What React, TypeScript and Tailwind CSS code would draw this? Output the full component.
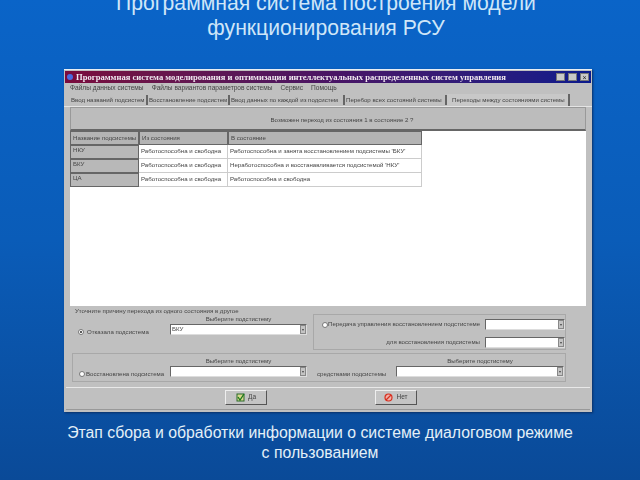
import React from "react";

const tabs = [
  { label: "Ввод названий подсистем", width: "w-[78px]" },
  { label: "Восстановление подсистем", width: "w-[82px]" },
  { label: "Ввод данных по каждой из подсистем", width: "w-[115px]" },
  { label: "Перебор всех состояний системы", width: "w-[102px]" },
];

const rows = [
  ["НКУ", "Работоспособна и свободна", "Работоспособна и занята восстановлением подсистемы 'БКУ'"],
  ["БКУ", "Работоспособна и свободна", "Неработоспособна и восстанавливается подсистемой 'НКУ'"],
  ["ЦА", "Работоспособна и свободна", "Работоспособна и свободна"],
];

const Radio = ({ checked }: { checked?: boolean }) => (
  <span className="w-[6px] h-[6px] shrink-0 rounded-full bg-white border border-[#777] flex items-center justify-center">
    {checked && <span className="w-[2px] h-[2px] rounded-full bg-[#222]" />}
  </span>
);

const Combo = ({ className, value }: { className: string; value?: string }) => (
  <div className={`h-[11px] shrink-0 bg-white border border-[#666] border-b-[#ddd] border-r-[#ddd] flex items-center justify-between pl-[1px] ${className}`}>
    <span>{value}</span>
    <span className="w-[6px] h-[9px] bg-[#c4c4c4] border border-[#888] flex items-center justify-center text-[4px] leading-none">▾</span>
  </div>
);

const App: React.FC = () => {
  return (
    <div className="w-[640px] h-[480px] overflow-hidden flex flex-col items-center bg-gradient-to-b from-[#0a64c8] via-[#0a5cb8] to-[#0a4a98] font-['Liberation_Sans',sans-serif]">
      <h1 className="mt-[-10px] h-[79px] pl-[12px] text-[21.2px] leading-[25px] text-[#cfe6f8] text-center font-normal shrink-0 whitespace-nowrap">
        Программная система построения модели
        <br />
        функционирования РСУ
      </h1>

      {/* program window */}
      <div className="self-start ml-[64px] w-[528px] h-[343px] shrink-0 bg-[#c0c0c0] border-t border-[#e8eef4] flex flex-col text-[6.1px] leading-none text-[#444] shadow-[1px_1px_2px_#0a2f66] blur-[0.4px]">
        <div className="h-[12px] mx-[1px] mt-[1px] flex items-center gap-[3px] pl-[2px] pr-[2px] bg-gradient-to-r from-[#7a0a3c] via-[#4a1464] to-[#0a1a8c]">
          <span className="w-[6px] h-[6px] rounded-sm bg-[#4a6ae0]" />
          <span className="flex-1 text-[8.6px] font-bold text-[#f0e8f0] font-['Liberation_Serif',serif] whitespace-nowrap">
            Программная система моделирования и оптимизации интеллектуальных распределенных систем управления
          </span>
          <span className="w-[9px] h-[8px] bg-[#c8c8c8] border border-[#777]" />
          <span className="w-[9px] h-[8px] bg-[#c8c8c8] border border-[#777]" />
          <span className="w-[9px] h-[8px] bg-[#c8c8c8] border border-[#777] text-[7px] text-[#222] flex items-center justify-center">×</span>
        </div>

        <div className="h-[11px] flex items-center gap-[8px] pl-[6px] text-[6.6px] whitespace-nowrap">
          <span>Файлы данных системы</span>
          <span>Файлы вариантов параметров системы</span>
          <span>Сервис</span>
          <span>Помощь</span>
        </div>

        <div className="h-[13px] flex items-center pl-[6px] whitespace-nowrap border-b border-[#e4e4e4]">
          {tabs.map((t) => (
            <span key={t.label} className={`${t.width} h-[10px] shrink-0 flex items-center border-r-2 border-[#666] pl-[1px]`}>
              {t.label}
            </span>
          ))}
          <span className="h-[12px] w-[123px] shrink-0 pl-[5px] flex items-center bg-[#c8c8c8] border-r-2 border-[#666]">
            Переходы между состояниями системы
          </span>
        </div>

        <div className="mx-[6px] h-[24px] pl-[28px] pt-[3px] bg-[#bcbcbc] border border-[#999] border-b-2 border-b-[#666] flex items-center justify-center">
          Возможен переход из состояния 1 в состояние 2 ?
        </div>

        <div className="mx-[6px] h-[175px] bg-white">
          <div className="grid grid-cols-[69px_89px_194px] w-[352px]">
            {["Название подсистемы", "Из состояния", "В состояние"].map((h) => (
              <div key={h} className="h-[14px] bg-[#b4b4b4] border border-[#666] pl-[2px] flex items-center whitespace-nowrap">
                {h}
              </div>
            ))}
            {rows.map((r) => (
              <React.Fragment key={r[0]}>
                <div className="h-[14px] bg-[#b8b8b8] border border-[#666] pl-[2px] pb-[3px] flex items-center">{r[0]}</div>
                <div className="h-[14px] border-b border-r border-[#ccc] pl-[2px] flex items-center whitespace-nowrap">{r[1]}</div>
                <div className="h-[14px] border-b border-r border-[#ccc] pl-[2px] flex items-center whitespace-nowrap">{r[2]}</div>
              </React.Fragment>
            ))}
          </div>
        </div>

        {/* причина перехода */}
        <div className="h-[81px] flex flex-col pl-[8px] whitespace-nowrap">
          <div className="h-[8px] pt-[2px] pl-[3px]">Уточните причину перехода из одного состояния в другое</div>
          <div className="flex h-[36px]">
            <div className="w-[241px] flex items-end pb-[15px] pl-[6px] gap-[3px]">
              <Radio checked />
              <span className="w-[80px]">Отказала подсистема</span>
              <div className="flex flex-col items-center gap-[2px]">
                <span>Выберите подстистему</span>
                <Combo className="w-[137px]" value="БКУ" />
              </div>
            </div>
            <div className="w-[253px] border border-[#a8a8a8] flex flex-col pt-[4px] gap-[7px]">
              <div className="flex items-center pl-[8px]">
                <Radio />
                <span className="w-[155px]">Передача управления восстановлением подстистеме</span>
                <Combo className="w-[80px] ml-[2px]" />
              </div>
              <div className="flex items-center justify-end gap-[5px]">
                <span>для восстановления подсистемы</span>
                <Combo className="w-[80px]" />
              </div>
            </div>
          </div>
          <div className="w-[494px] h-[29px] mt-[3px] border border-[#a8a8a8] flex items-end pb-[4px] pl-[6px]">
            <Radio />
            <span className="w-[84px] ml-[1px] shrink-0">Восстановлена подсистема</span>
            <div className="flex flex-col items-center gap-[2px]">
              <span>Выберите подстистему</span>
              <Combo className="w-[137px]" />
            </div>
            <span className="w-[79px] ml-[10px] shrink-0">средствами подсистемы</span>
            <div className="flex flex-col items-center gap-[2px]">
              <span>Выберите подстистему</span>
              <Combo className="w-[168px]" />
            </div>
          </div>
        </div>

        <div className="mx-[2px] h-[23px] pb-[2px] border-t border-[#e8e8e8] border-b border-b-[#999] flex items-center pl-[159px] gap-[108px] text-[6.5px]">
          <button className="w-[42px] h-[15px] flex items-center justify-center gap-[3px] bg-[#c4c4c4] border border-[#eee] border-b-[#555] border-r-[#555]">
            <svg width="9" height="9" viewBox="0 0 9 9">
              <rect x="1" y="1" width="7" height="7" fill="#d8d890" stroke="#2a6a2a" />
              <path d="M2 4 L4 7 L8 1" fill="none" stroke="#1a7a1a" strokeWidth="1.3" />
            </svg>
            Да
          </button>
          <button className="w-[42px] h-[15px] flex items-center justify-center gap-[3px] bg-[#c4c4c4] border border-[#eee] border-b-[#555] border-r-[#555]">
            <svg width="9" height="9" viewBox="0 0 9 9">
              <circle cx="4.5" cy="4.5" r="3.5" fill="#f0b0a8" stroke="#d83020" strokeWidth="1.2" />
              <path d="M2 7 L7 2" stroke="#d83020" strokeWidth="1.2" />
            </svg>
            Нет
          </button>
        </div>
      </div>

      <p className="mt-[11px] w-[560px] text-[15.8px] leading-[20px] text-[#e4f0f8] text-center">
        Этап сбора и обработки информации о системе диалоговом режиме
        <br />с пользованием
      </p>
    </div>
  );
};

export default App;
